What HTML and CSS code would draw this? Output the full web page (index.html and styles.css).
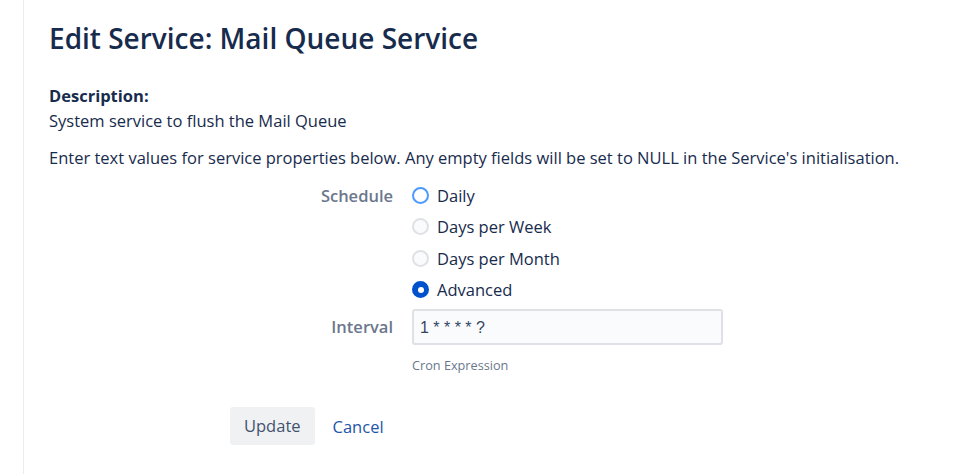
FILE: index.html
```html
<!DOCTYPE html>
<html lang="en">
<head>
<meta charset="utf-8">
<title>Edit Service: Mail Queue Service</title>
<link rel="stylesheet" href="styles.css">
</head>
<body>
<div class="page">
  <h1 class="title">Edit Service: Mail Queue Service</h1>
  <p class="desc-label">Description:</p>
  <p class="desc-text">System service to flush the Mail Queue</p>
  <p class="intro">Enter text values for service properties below. Any empty fields will be set to NULL in the Service's initialisation.</p>
  <form class="form">
    <div class="field-row">
      <div class="label label-schedule">Schedule</div>
      <div class="radios">
        <label class="radio"><span class="dot dot-focus"></span><span>Daily</span></label>
        <label class="radio"><span class="dot"></span><span>Days per Week</span></label>
        <label class="radio"><span class="dot"></span><span>Days per Month</span></label>
        <label class="radio"><span class="dot dot-checked"></span><span>Advanced</span></label>
      </div>
    </div>
    <div class="field-row field-interval">
      <div class="label label-interval">Interval</div>
      <div class="field">
        <div class="input">1 * * * * ?</div>
        <div class="hint">Cron Expression</div>
      </div>
    </div>
    <div class="buttons">
      <span class="btn">Update</span>
      <a class="cancel">Cancel</a>
    </div>
  </form>
</div>
</body>
</html>
```
FILE: styles.css
```css
html, body {
  margin: 0;
  padding: 0;
  background: #ffffff;
}
body {
  font-family: "Open Sans", "Noto Sans", sans-serif;
  color: #172b4d;
  font-size: 16.5px;
}
.page {
  margin-left: 23px;
  border-left: 1px solid #ebecf0;
  min-height: 474px;
  padding: 20px 0 0 25px;
  box-sizing: border-box;
}
.title {
  margin: 0;
  font-size: 28px;
  line-height: 36px;
  font-weight: 600;
  color: #172b4d;
}
.desc-label {
  margin: 28px 0 0;
  font-weight: 700;
  line-height: 24px;
}
.desc-text {
  margin: 1px 0 0;
  line-height: 24px;
}
.intro {
  margin: 13px 0 0;
  line-height: 24px;
}
.form {
  margin-top: 10px;
}
.field-row {
  display: grid;
  grid-template-columns: 344px 1fr;
  column-gap: 19px;
}
.label {
  text-align: right;
  color: #6b778c;
  font-weight: 600;
  line-height: 31px;
}
.label-schedule {
  line-height: 32px;
}
.radios {
  display: flex;
  flex-direction: column;
}
.radio {
  display: flex;
  align-items: center;
  gap: 8px;
  height: 31.3px;
}
.dot {
  width: 13px;
  height: 13px;
  border-radius: 50%;
  border: 2px solid #dfe1e6;
  background: #fafbfc;
  flex: none;
}
.dot-focus {
  border-color: #4c9aff;
  background: #ffffff;
}
.dot-checked {
  border-color: #0052cc;
  background: #0052cc;
  position: relative;
}
.dot-checked::after {
  content: "";
  position: absolute;
  left: 3.5px;
  top: 3.5px;
  width: 6px;
  height: 6px;
  border-radius: 50%;
  background: #ffffff;
}
.field-interval {
  margin-top: 4px;
}
.label-interval {
  line-height: 36px;
}
.input {
  width: 301px;
  height: 32px;
  border: 2px solid #dfe1e6;
  border-radius: 3px;
  background: #fafbfc;
  line-height: 34px;
  padding-left: 6px;
  color: #344563;
  font-family: "Liberation Sans", Arial, sans-serif;
  font-size: 16px;
}
.hint {
  margin-top: 12px;
  font-size: 12.7px;
  line-height: 16px;
  color: #6b778c;
}
.buttons {
  margin-top: 34px;
  margin-left: 181px;
  display: flex;
  align-items: center;
  gap: 18px;
}
.btn {
  display: inline-block;
  background: #f0f1f3;
  color: #42526e;
  border-radius: 3px;
  height: 38px;
  line-height: 38px;
  padding: 0 14px;
  font-size: 16.5px;
}
.cancel {
  color: #2355a6;
  font-size: 16.5px;
}
```
